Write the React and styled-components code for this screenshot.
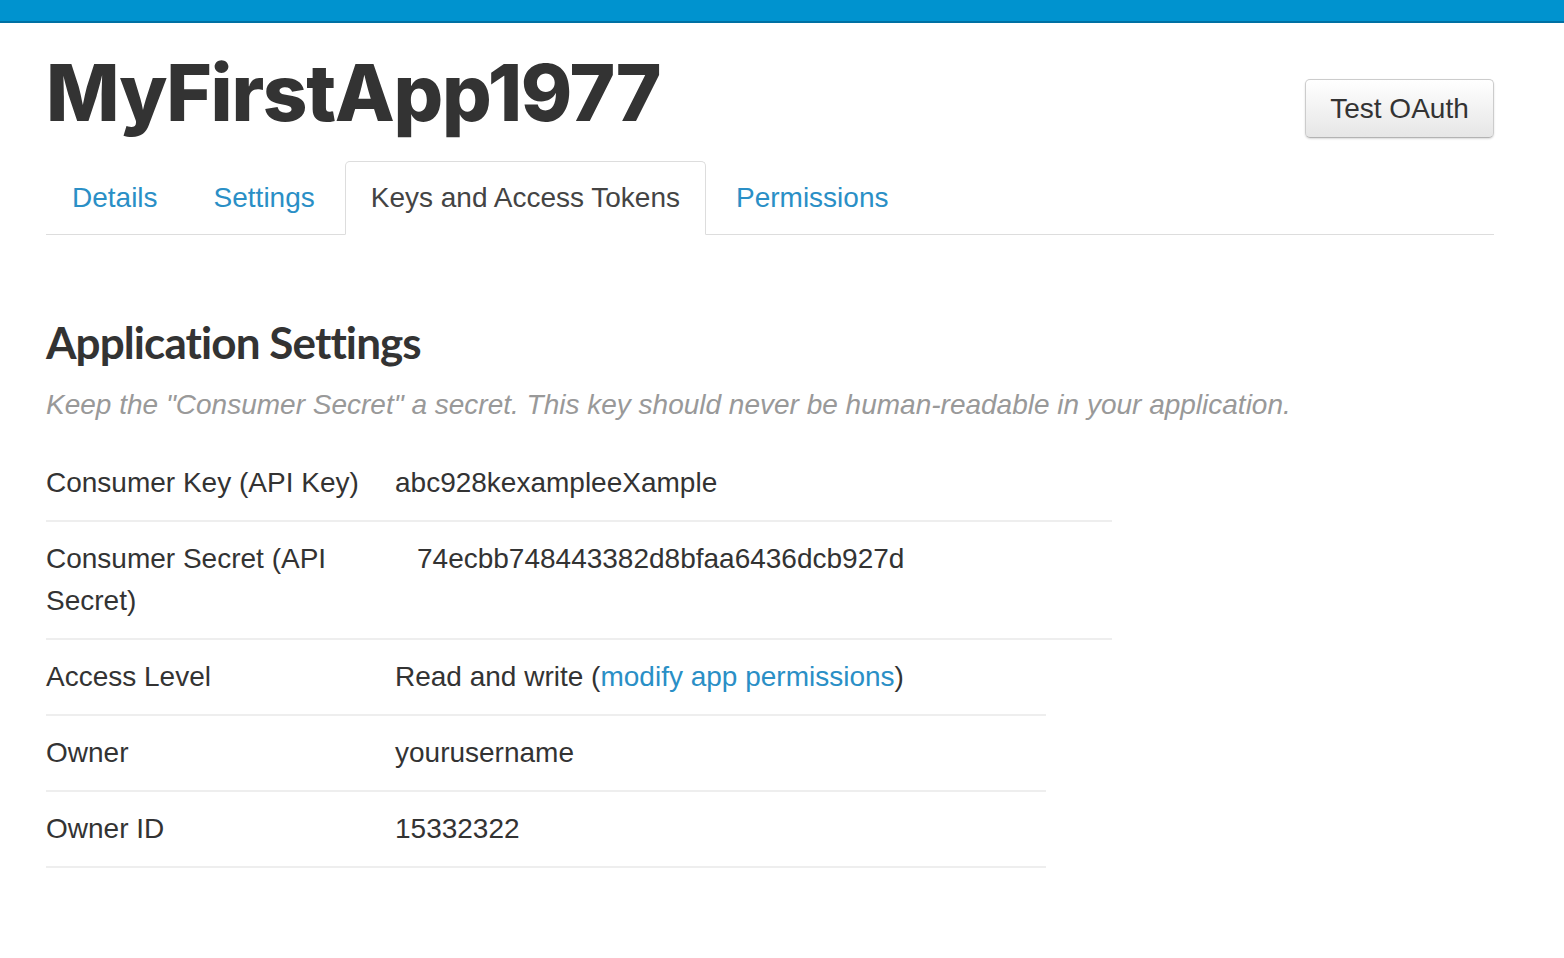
import React from "react";
import styled, { createGlobalStyle } from "styled-components";

const Global = createGlobalStyle`
  html, body { margin: 0; padding: 0; background: #fff; }
  body { font-family: "Liberation Sans", Arial, sans-serif; color: #333; }
`;

const TopBar = styled.div`
  height: 21px;
  background: #0093cf;
  border-bottom: 2px solid #0070a3;
`;

const Page = styled.div`
  padding: 0 70px 0 46px;
`;

const Header = styled.header`
  display: flex;
  justify-content: space-between;
  align-items: flex-start;
  padding-top: 25px;
`;

const Title = styled.h1`
  margin: 0;
  font-family: Inter, "Liberation Sans", sans-serif;
  font-weight: 800;
  font-size: 78px;
  line-height: 90px;
  letter-spacing: -1.3px;
  color: #333;
`;

const Button = styled.button`
  margin-top: 31px;
  width: 189px;
  height: 59px;
  border: 1px solid #ccc;
  border-bottom-color: #b3b3b3;
  border-radius: 5px;
  background: linear-gradient(#ffffff, #e6e6e6);
  box-shadow: inset 0 1px 0 rgba(255,255,255,0.2), 0 1px 2px rgba(0,0,0,0.15);
  font-family: "Liberation Sans", Arial, sans-serif;
  font-size: 28px;
  color: #333;
  padding: 0;
`;

const Tabs = styled.nav`
  display: flex;
  margin-top: 23px;
  border-bottom: 1px solid #ddd;
`;

const Tab = styled.a`
  display: block;
  height: 72px;
  line-height: 72px;
  padding: 0 25px;
  margin-right: 4px;
  margin-bottom: -1px;
  border: 1px solid transparent;
  border-radius: 5px 5px 0 0;
  font-size: 28px;
  text-decoration: none;
  color: ${(p) => (p.$active ? "#444" : "#2a8fc6")};
  ${(p) =>
    p.$active &&
    `border-color: #ddd; border-bottom-color: #fff; background: #fff;`}
`;

const Heading = styled.h2`
  margin: 80px 0 0;
  font-family: Lato, "Liberation Sans", sans-serif;
  font-weight: 700;
  font-size: 44px;
  line-height: 54px;
  color: #333;
  letter-spacing: -0.9px;
`;

const Note = styled.p`
  margin: 15px 0 20px;
  font-style: italic;
  font-size: 28px;
  line-height: 42px;
  color: #999;
`;

const Table = styled.div`
  width: ${(p) => p.$width}px;
`;

const Row = styled.div`
  display: flex;
  padding: 16px 0;
  border-bottom: 2px solid #eee;
  font-size: 28px;
  line-height: 42px;
`;

const Label = styled.div`
  width: 349px;
  flex-shrink: 0;
`;

const Value = styled.div`
  padding-left: ${(p) => p.$indent || 0}px;
`;

const Link = styled.a`
  color: #2a8fc6;
  text-decoration: none;
`;

export default function App() {
  return (
    <>
      <Global />
      <TopBar />
      <Page>
        <Header>
          <Title>MyFirstApp1977</Title>
          <Button>Test OAuth</Button>
        </Header>
        <Tabs>
          <Tab href="#">Details</Tab>
          <Tab href="#">Settings</Tab>
          <Tab href="#" $active>Keys and Access Tokens</Tab>
          <Tab href="#">Permissions</Tab>
        </Tabs>
        <Heading>Application Settings</Heading>
        <Note>
          Keep the "Consumer Secret" a secret. This key should never be human-readable in your application.
        </Note>
        <Table $width={1066}>
          <Row>
            <Label>Consumer Key (API Key)</Label>
            <Value>abc928kexampleeXample</Value>
          </Row>
          <Row>
            <Label>Consumer Secret (API Secret)</Label>
            <Value $indent={22}>74ecbb748443382d8bfaa6436dcb927d</Value>
          </Row>
        </Table>
        <Table $width={1000}>
          <Row>
            <Label>Access Level</Label>
            <Value>
              Read and write (<Link href="#">modify app permissions</Link>)
            </Value>
          </Row>
          <Row>
            <Label>Owner</Label>
            <Value>yourusername</Value>
          </Row>
          <Row>
            <Label>Owner ID</Label>
            <Value>15332322</Value>
          </Row>
        </Table>
      </Page>
    </>
  );
}
